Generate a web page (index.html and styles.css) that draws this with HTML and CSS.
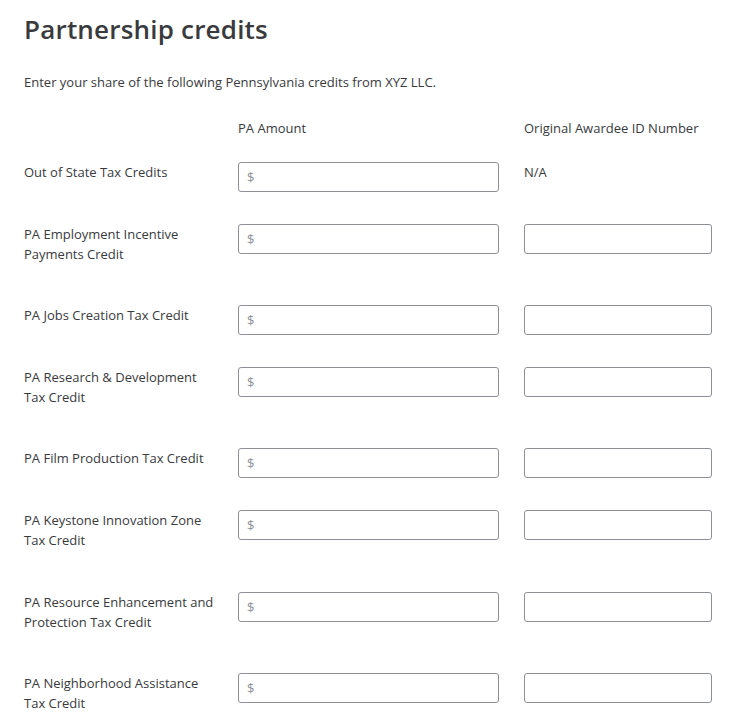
FILE: index.html
```html
<!DOCTYPE html>
<html lang="en">
<head>
    <meta charset="UTF-8">
    <meta name="viewport" content="width=device-width, initial-scale=1.0">
    <title>Partnership credits</title>
    <link rel="stylesheet" href="styles.css">
</head>
<body>
    <div class="page">
        <h1>Partnership credits</h1>
        <p class="intro">Enter your share of the following Pennsylvania credits from XYZ LLC.</p>

        <div class="credits">
            <!-- column headers -->
            <div></div>
            <div class="colhead">PA Amount</div>
            <div class="colhead">Original Awardee ID Number</div>

            <div class="label">Out of State Tax Credits</div>
            <div class="field money"><span>$</span><input type="text"></div>
            <div class="na">N/A</div>

            <div class="label">PA Employment Incentive<br>Payments Credit</div>
            <div class="field money"><span>$</span><input type="text"></div>
            <div class="field"><input type="text"></div>

            <div class="label">PA Jobs Creation Tax Credit</div>
            <div class="field money"><span>$</span><input type="text"></div>
            <div class="field"><input type="text"></div>

            <div class="label">PA Research &amp; Development<br>Tax Credit</div>
            <div class="field money"><span>$</span><input type="text"></div>
            <div class="field"><input type="text"></div>

            <div class="label">PA Film Production Tax Credit</div>
            <div class="field money"><span>$</span><input type="text"></div>
            <div class="field"><input type="text"></div>

            <div class="label">PA Keystone Innovation Zone<br>Tax Credit</div>
            <div class="field money"><span>$</span><input type="text"></div>
            <div class="field"><input type="text"></div>

            <div class="label">PA Resource Enhancement and<br>Protection Tax Credit</div>
            <div class="field money"><span>$</span><input type="text"></div>
            <div class="field"><input type="text"></div>

            <div class="label">PA Neighborhood Assistance<br>Tax Credit</div>
            <div class="field money"><span>$</span><input type="text"></div>
            <div class="field"><input type="text"></div>
        </div>
    </div>
</body>
</html>
```

FILE: styles.css
```css
body { margin: 0; background: #fff; color: #393a3d; font-family: "Open Sans", "Noto Sans", Arial, sans-serif; }
.page { padding: 11px 24px 40px 24px; }
h1 { margin: 0; font-size: 26px; line-height: 36px; font-weight: 600; letter-spacing: 0.2px; }
.intro { margin: 25px 0 0 0; font-size: 13px; line-height: 20px; }
.credits { display: grid; grid-template-columns: 190px 261px 189px; column-gap: 24px; row-gap: 31.6px; margin-top: 26px; align-items: start; }
.colhead { font-size: 13px; line-height: 20px; margin-bottom: -7.6px; }
.credits > :nth-child(3n) { margin-left: 1px; }
.label { font-size: 13px; line-height: 20px; padding-bottom: 10px; }
.na { font-size: 13px; line-height: 20px; }
.field { position: relative; height: 30px; box-sizing: border-box; border: 1px solid #8d9096; border-radius: 3px; background: #fff; }
.field input { border: none; outline: none; background: transparent; width: 100%; height: 100%; box-sizing: border-box; padding: 0 8px; font: inherit; font-size: 13px; }
.money input { padding-left: 20px; }
.money span { position: absolute; left: 8px; top: 6px; font-size: 13px; line-height: 16px; color: #8d9096; }
```
